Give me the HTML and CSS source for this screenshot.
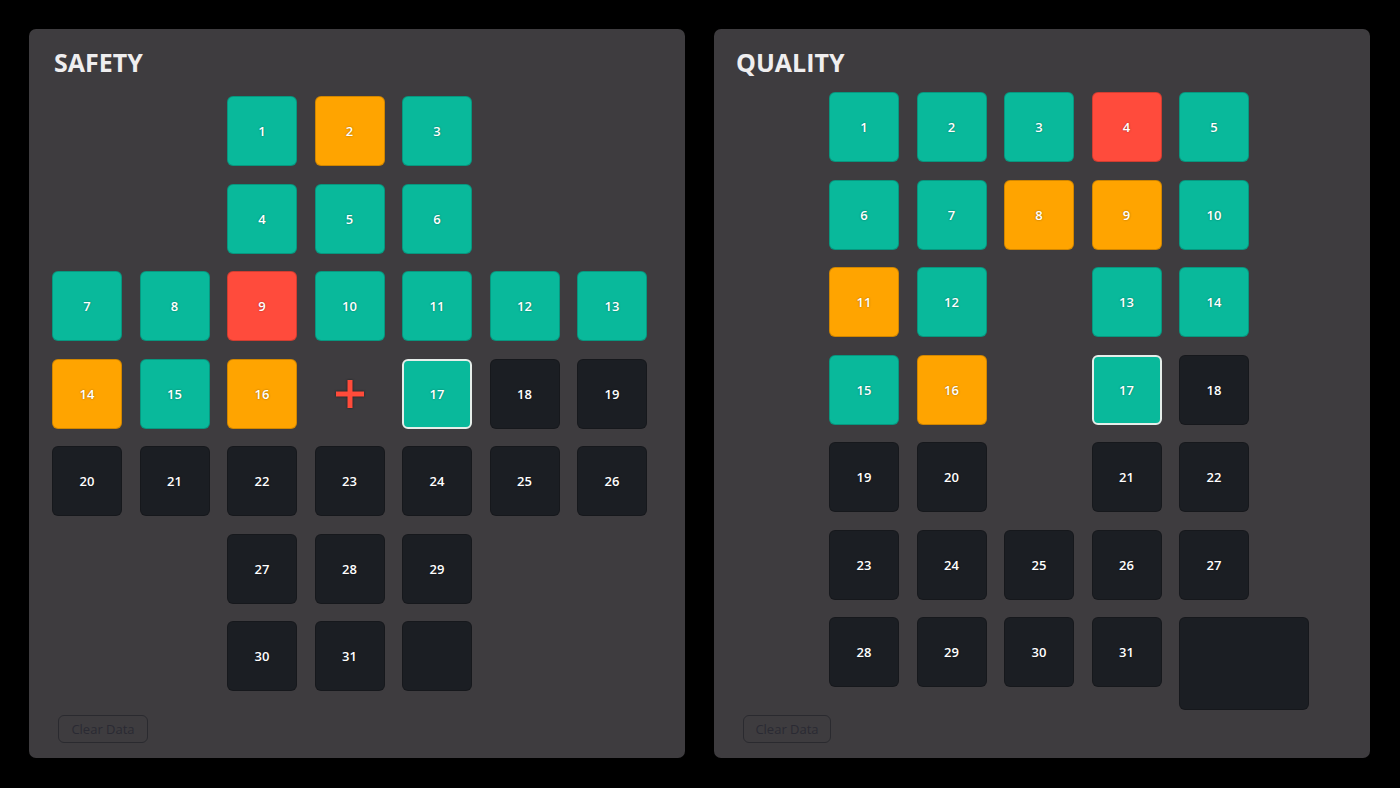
FILE: index.html
```html
<!DOCTYPE html>
<html>
<head>
<meta charset="utf-8">
<link rel="stylesheet" href="styles.css">
</head>
<body>
<div class="board">
  <section class="panel panel--safety">
    <h1 class="panel-title">SAFETY</h1>
    <div class="grid grid--seven">
      <div class="cell"></div><div class="cell"></div>
      <div class="tile ok">1</div><div class="tile warn">2</div><div class="tile ok">3</div>
      <div class="cell"></div><div class="cell"></div>

      <div class="cell"></div><div class="cell"></div>
      <div class="tile ok">4</div><div class="tile ok">5</div><div class="tile ok">6</div>
      <div class="cell"></div><div class="cell"></div>

      <div class="tile ok">7</div><div class="tile ok">8</div><div class="tile bad">9</div><div class="tile ok">10</div><div class="tile ok">11</div><div class="tile ok">12</div><div class="tile ok">13</div>

      <div class="tile warn">14</div><div class="tile ok">15</div><div class="tile warn">16</div>
      <div class="cell cross"><svg width="30" height="30" viewBox="0 0 30 30"><rect x="12.5" y="1" width="5" height="28" fill="#ff4b3a"/><rect x="1" y="12.5" width="28" height="5" fill="#ff4b3a"/></svg></div>
      <div class="tile ok selected">17</div><div class="tile">18</div><div class="tile">19</div>

      <div class="tile">20</div><div class="tile">21</div><div class="tile">22</div><div class="tile">23</div><div class="tile">24</div><div class="tile">25</div><div class="tile">26</div>

      <div class="cell"></div><div class="cell"></div>
      <div class="tile">27</div><div class="tile">28</div><div class="tile">29</div>
      <div class="cell"></div><div class="cell"></div>

      <div class="cell"></div><div class="cell"></div>
      <div class="tile">30</div><div class="tile">31</div><div class="tile"></div>
      <div class="cell"></div><div class="cell"></div>
    </div>
    <button class="clear-btn">Clear Data</button>
  </section>

  <section class="panel panel--quality">
    <h1 class="panel-title">QUALITY</h1>
    <div class="grid grid--five">
      <div class="tile ok">1</div><div class="tile ok">2</div><div class="tile ok">3</div><div class="tile bad">4</div><div class="tile ok">5</div>
      <div class="tile ok">6</div><div class="tile ok">7</div><div class="tile warn">8</div><div class="tile warn">9</div><div class="tile ok">10</div>
      <div class="tile warn">11</div><div class="tile ok">12</div><div class="cell"></div><div class="tile ok">13</div><div class="tile ok">14</div>
      <div class="tile ok">15</div><div class="tile warn">16</div><div class="cell"></div><div class="tile ok selected">17</div><div class="tile">18</div>
      <div class="tile">19</div><div class="tile">20</div><div class="cell"></div><div class="tile">21</div><div class="tile">22</div>
      <div class="tile">23</div><div class="tile">24</div><div class="tile">25</div><div class="tile">26</div><div class="tile">27</div>
      <div class="tile">28</div><div class="tile">29</div><div class="tile">30</div><div class="tile">31</div><div class="tile tile--wide"></div>
    </div>
    <button class="clear-btn">Clear Data</button>
  </section>
</div>
</body>
</html>
```

FILE: styles.css
```css
html, body {
  margin: 0;
  padding: 0;
  background: #000;
}

body {
  font-family: "Open Sans", "Noto Sans", sans-serif;
  width: 1400px;
  height: 788px;
  overflow: hidden;
}

.board {
  display: flex;
  gap: 29px;
  padding: 29px 0 0 29px;
}

.panel {
  width: 656px;
  height: 729px;
  box-sizing: border-box;
  background: #3e3c3f;
  border-radius: 7px;
  display: flex;
  flex-direction: column;
  padding: 17.5px 0 15px 0;
}

.panel-title {
  margin: 0;
  font-size: 25px;
  line-height: 30px;
  font-weight: 700;
  color: #efeeef;
  letter-spacing: 0;
}

.panel--safety .panel-title { padding-left: 25px; }
.panel--quality .panel-title { padding-left: 22px; }

.grid {
  display: grid;
  grid-auto-rows: 70px;
  gap: 17.5px;
  align-items: start;
}

.grid--seven {
  grid-template-columns: repeat(7, 70px);
  margin: 19.5px 0 0 23px;
}

.grid--five {
  grid-template-columns: repeat(5, 70px);
  margin: 15.5px 0 0 115px;
}

.cell {
  width: 70px;
  height: 70px;
}

.cross {
  display: flex;
  align-items: center;
  justify-content: center;
}

.cross svg {
  filter: drop-shadow(0 0 1px rgba(0, 0, 0, 0.5));
}

.tile {
  width: 70px;
  height: 70px;
  box-sizing: border-box;
  border-radius: 6px;
  background: #1b1e23;
  border: 1px solid rgba(0, 0, 0, 0.18);
  display: flex;
  align-items: center;
  justify-content: center;
  color: #ffffff;
  font-size: 13px;
  font-weight: 600;
  text-shadow: 0 0 2px rgba(0, 0, 0, 0.4);
}

.tile.ok { background: #09b99b; }
.tile.warn { background: #ffa400; }
.tile.bad { background: #ff4b3c; }

.tile.selected {
  border: 2px solid #e6eeea;
}

.tile--wide {
  width: 130px;
  height: 93px;
}

.clear-btn {
  margin-top: auto;
  margin-left: 29px;
  width: 90px;
  height: 28px;
  padding: 0;
  background: transparent;
  border: 1px solid #2a2a2f;
  border-radius: 6px;
  font-family: "Open Sans", "Noto Sans", sans-serif;
  font-size: 13px;
  color: #2a2a33;
  align-self: flex-start;
}

.panel--quality .clear-btn {
  width: 88px;
}
```
